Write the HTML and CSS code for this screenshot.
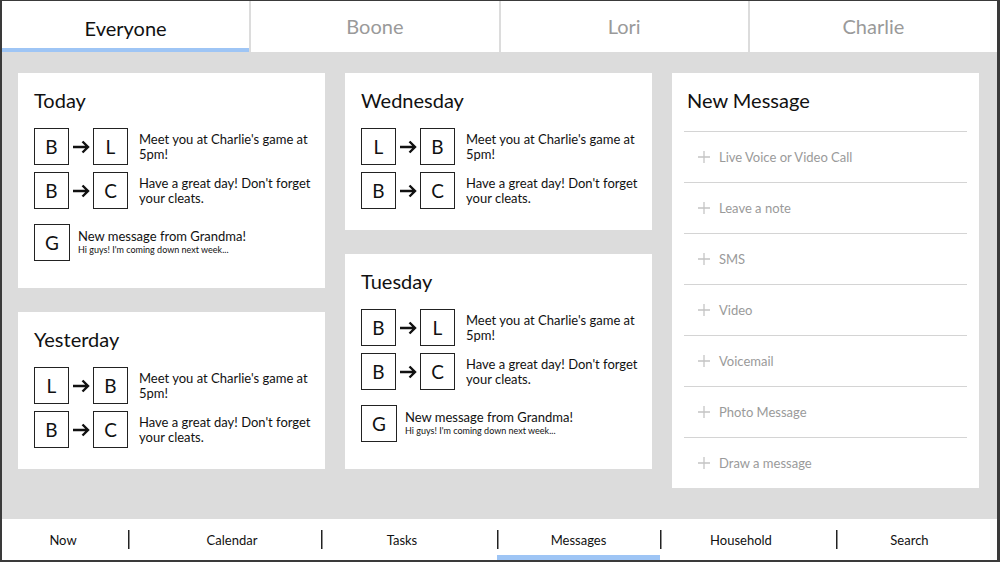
FILE: index.html
```html
<!DOCTYPE html>
<html lang="en">
<head>
  <meta charset="UTF-8" />
  <title>Messages</title>
  <link rel="stylesheet" href="styles.css">
</head>
<body>

<div class="frame">
  <div class="tabs">
    <div class="tab active">Everyone</div>
    <div class="tab">Boone</div>
    <div class="tab">Lori</div>
    <div class="tab">Charlie</div>
  </div>

  <div class="main">
    <div class="column">
      <div class="card">
        <h2>Today</h2>
        <div class="row">
          <span class="box">B</span><svg class="arrow" viewBox="0 0 18 14"><path d="M1 7 H16 M10.5 1.5 L16 7 L10.5 12.5"/></svg><span class="box">L</span>
          <p class="text">Meet you at Charlie's game at 5pm!</p>
        </div>
        <div class="row">
          <span class="box">B</span><svg class="arrow" viewBox="0 0 18 14"><path d="M1 7 H16 M10.5 1.5 L16 7 L10.5 12.5"/></svg><span class="box">C</span>
          <p class="text">Have a great day! Don't forget your cleats.</p>
        </div>
        <div class="row note">
          <span class="box">G</span>
          <div class="note-text">
            <p class="text">New message from Grandma!</p>
            <p class="sub">Hi guys! I'm coming down next week...</p>
          </div>
        </div>
      </div>

      <div class="card">
        <h2>Yesterday</h2>
        <div class="row">
          <span class="box">L</span><svg class="arrow" viewBox="0 0 18 14"><path d="M1 7 H16 M10.5 1.5 L16 7 L10.5 12.5"/></svg><span class="box">B</span>
          <p class="text">Meet you at Charlie's game at 5pm!</p>
        </div>
        <div class="row">
          <span class="box">B</span><svg class="arrow" viewBox="0 0 18 14"><path d="M1 7 H16 M10.5 1.5 L16 7 L10.5 12.5"/></svg><span class="box">C</span>
          <p class="text">Have a great day! Don't forget your cleats.</p>
        </div>
      </div>
    </div>

    <div class="column">
      <div class="card">
        <h2>Wednesday</h2>
        <div class="row">
          <span class="box">L</span><svg class="arrow" viewBox="0 0 18 14"><path d="M1 7 H16 M10.5 1.5 L16 7 L10.5 12.5"/></svg><span class="box">B</span>
          <p class="text">Meet you at Charlie's game at 5pm!</p>
        </div>
        <div class="row">
          <span class="box">B</span><svg class="arrow" viewBox="0 0 18 14"><path d="M1 7 H16 M10.5 1.5 L16 7 L10.5 12.5"/></svg><span class="box">C</span>
          <p class="text">Have a great day! Don't forget your cleats.</p>
        </div>
      </div>

      <div class="card">
        <h2>Tuesday</h2>
        <div class="row">
          <span class="box">B</span><svg class="arrow" viewBox="0 0 18 14"><path d="M1 7 H16 M10.5 1.5 L16 7 L10.5 12.5"/></svg><span class="box">L</span>
          <p class="text">Meet you at Charlie's game at 5pm!</p>
        </div>
        <div class="row">
          <span class="box">B</span><svg class="arrow" viewBox="0 0 18 14"><path d="M1 7 H16 M10.5 1.5 L16 7 L10.5 12.5"/></svg><span class="box">C</span>
          <p class="text">Have a great day! Don't forget your cleats.</p>
        </div>
        <div class="row note">
          <span class="box">G</span>
          <div class="note-text">
            <p class="text">New message from Grandma!</p>
            <p class="sub">Hi guys! I'm coming down next week...</p>
          </div>
        </div>
      </div>
    </div>

    <div class="column">
      <div class="card new-message">
        <h2>New Message</h2>
        <ul class="options">
          <li><svg class="plus" viewBox="0 0 14 14"><path d="M7 0 V14 M0 7 H14"/></svg>Live Voice or Video Call</li>
          <li><svg class="plus" viewBox="0 0 14 14"><path d="M7 0 V14 M0 7 H14"/></svg>Leave a note</li>
          <li><svg class="plus" viewBox="0 0 14 14"><path d="M7 0 V14 M0 7 H14"/></svg>SMS</li>
          <li><svg class="plus" viewBox="0 0 14 14"><path d="M7 0 V14 M0 7 H14"/></svg>Video</li>
          <li><svg class="plus" viewBox="0 0 14 14"><path d="M7 0 V14 M0 7 H14"/></svg>Voicemail</li>
          <li><svg class="plus" viewBox="0 0 14 14"><path d="M7 0 V14 M0 7 H14"/></svg>Photo Message</li>
          <li><svg class="plus" viewBox="0 0 14 14"><path d="M7 0 V14 M0 7 H14"/></svg>Draw a message</li>
        </ul>
      </div>
    </div>
  </div>

  <div class="nav">
    <div class="nav-item now">Now</div>
    <div class="nav-item calendar">Calendar</div>
    <div class="nav-item tasks">Tasks</div>
    <div class="nav-item messages active">Messages</div>
    <div class="nav-item household">Household</div>
    <div class="nav-item search">Search</div>
  </div>
</div>

</body>
</html>
```

FILE: styles.css
```css
body {
  margin: 0;
  font-family: 'Lato', 'Noto Sans', sans-serif;
  color: #111;
  background: #fff;
}

p {
  margin: 0;
}

.frame {
  width: 1000px;
  height: 562px;
  box-sizing: border-box;
  border-left: 2px solid #3a3a3a;
  border-top: 1px solid #3a3a3a;
  border-right: 3px solid #3a3a3a;
  border-bottom: 2px solid #3a3a3a;
  background: #dcdcdc;
  display: flex;
  flex-direction: column;
}

/* top tabs */
.tabs {
  display: grid;
  grid-template-columns: repeat(4, 1fr);
  gap: 2px;
  height: 51px;
  background: #dcdcdc;
}

.tab {
  background: #fff;
  color: #9a9a9a;
  font-size: 20px;
  display: flex;
  align-items: center;
  justify-content: center;
  padding-bottom: 1px;
}

.tab.active {
  color: #111;
  padding-bottom: 0;
  padding-top: 2px;
  box-shadow: inset 0 -4px #9ec5f5;
}

/* cards */
.main {
  flex: 1;
  display: grid;
  grid-template-columns: 307px 307px 307px;
  column-gap: 20px;
  padding: 21px 16px 0 16px;
  align-items: start;
}

.column {
  display: flex;
  flex-direction: column;
  gap: 24px;
}

.card {
  background: #fff;
  padding: 15px 8px 21px 16px;
}

.card h2 {
  margin: 0 0 16px 0;
  font-size: 20px;
  font-weight: 400;
  line-height: 24px;
}

.row {
  display: flex;
  align-items: center;
  margin-bottom: 7px;
}

.row:last-child {
  margin-bottom: 0;
}

.row.note {
  margin-top: 15px;
  margin-bottom: 6px;
}

.box {
  width: 35px;
  height: 37px;
  box-sizing: border-box;
  border: 1.5px solid #222;
  display: flex;
  align-items: center;
  justify-content: center;
  font-size: 19px;
  flex-shrink: 0;
}

.arrow {
  width: 18px;
  height: 14px;
  margin: 0 3px;
  flex-shrink: 0;
  fill: none;
  stroke: #111;
  stroke-width: 2.4;
}

.text {
  flex: 1;
  font-size: 13px;
  line-height: 15px;
  margin-left: 11px;
}

.note .box {
  width: 36px;
}

.note-text {
  margin-left: 8px;
}

.note-text .text {
  margin-left: 0;
}

.sub {
  font-size: 9px;
  line-height: 12px;
}

/* new message list */
.new-message {
  padding: 15px 12px 0 12px;
}

.new-message h2 {
  margin: 0 0 19px 3px;
}

.options {
  list-style: none;
  margin: 0;
  padding: 0;
}

.options li {
  height: 50px;
  border-top: 1px solid #d4d4d4;
  display: flex;
  align-items: center;
  padding-left: 14px;
  font-size: 13px;
  color: #9a9a9a;
}

.plus {
  width: 12px;
  height: 12px;
  margin-right: 9px;
  fill: none;
  stroke: #c4c4c4;
  stroke-width: 1.5;
}

/* bottom nav */
.nav {
  height: 41px;
  background: #fff;
  display: grid;
  grid-template-columns: 126px 193px 176px 163px 176px 1fr;
}

.nav-item {
  display: flex;
  align-items: center;
  justify-content: center;
  font-size: 13px;
  color: #111;
  background: linear-gradient(#222, #222) left center / 1.5px 19px no-repeat;
}

.nav-item.now {
  background: none;
  padding-right: 4px;
}

.nav-item.calendar {
  padding-left: 15px;
}

.nav-item.tasks,
.nav-item.household,
.nav-item.search {
  padding-right: 14px;
}

.nav-item.active {
  box-shadow: inset 0 -5px #9ec5f5;
}
```
